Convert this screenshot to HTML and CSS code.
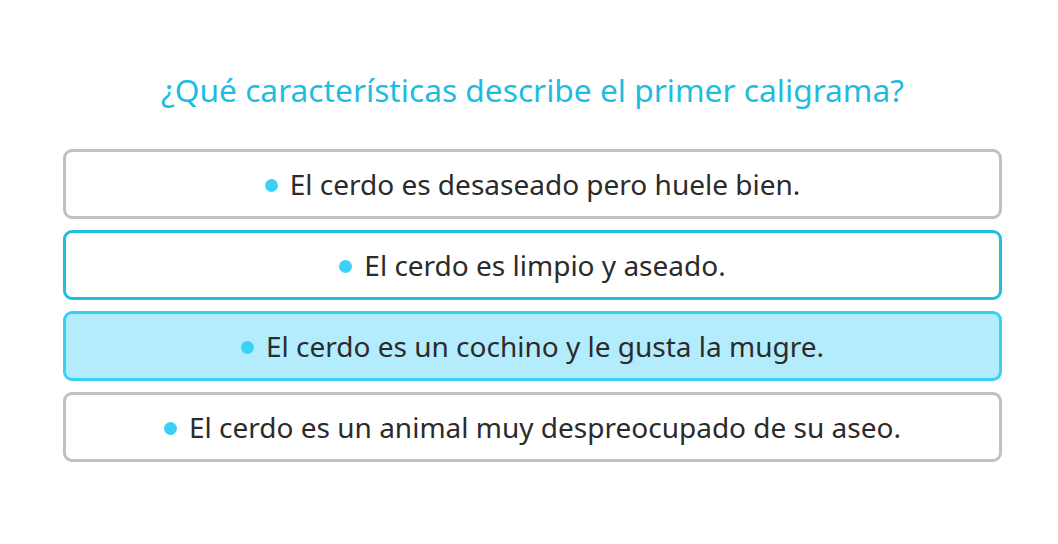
FILE: index.html
```html
<!DOCTYPE html>
<html lang="es">
<head>
<meta charset="utf-8">
<link rel="stylesheet" href="styles.css">
</head>
<body>
<main class="quiz">
  <h1 class="question">¿Qué características describe el primer caligrama?</h1>
  <ul class="options">
    <li class="option"><span class="dot"></span>El cerdo es desaseado pero huele bien.</li>
    <li class="option option-focus"><span class="dot"></span>El cerdo es limpio y aseado.</li>
    <li class="option option-selected"><span class="dot"></span>El cerdo es un cochino y le gusta la mugre.</li>
    <li class="option"><span class="dot"></span>El cerdo es un animal muy despreocupado de su aseo.</li>
  </ul>
</main>
</body>
</html>
```
FILE: styles.css
```css
html, body {
  margin: 0;
  padding: 0;
  background: #ffffff;
}
body {
  font-family: "Noto Sans", "Open Sans", sans-serif;
  width: 1058px;
  height: 544px;
  overflow: hidden;
}
.quiz {
  padding: 66px 56px 0 63px;
}
.question {
  margin: 0 0 35px;
  text-align: center;
  font-weight: 400;
  font-size: 31.7px;
  line-height: 48px;
  color: #1fbcdf;
}
.options {
  list-style: none;
  margin: 0;
  padding: 0;
  display: flex;
  flex-direction: column;
  gap: 11px;
}
.option {
  height: 70px;
  box-sizing: border-box;
  border: 3px solid #c0c0c0;
  border-radius: 9px;
  display: flex;
  align-items: center;
  justify-content: center;
  gap: 12px;
  font-size: 28px;
  color: #2b2b2b;
  background: #ffffff;
}
.option-focus {
  border-color: #1fbede;
}
.option-selected {
  border-color: #38d0f5;
  background: #b3ecfd;
}
.dot {
  width: 13px;
  height: 13px;
  border-radius: 50%;
  background: #3bd1f5;
  flex: none;
  margin-top: 2px;
}
```
